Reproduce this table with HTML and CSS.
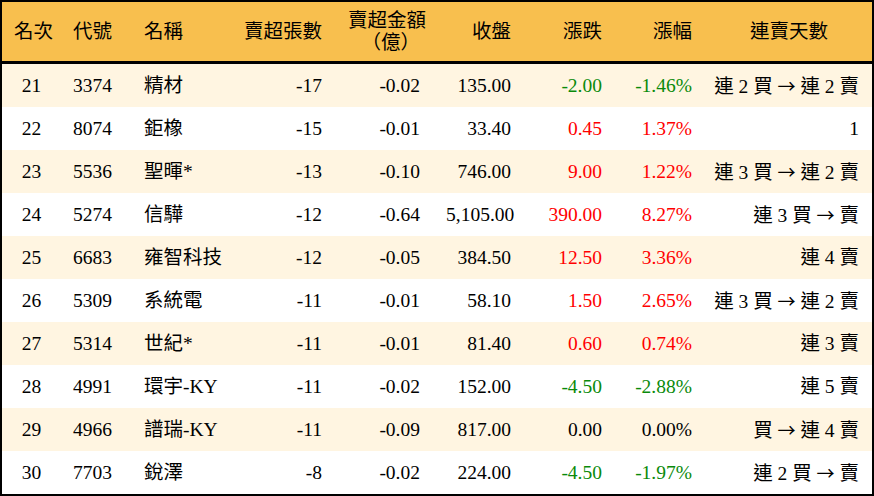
FILE: index.html
```html
<!DOCTYPE html>
<html lang="zh-Hant">
<head>
<meta charset="utf-8">
<title>賣超排行</title>
<link rel="stylesheet" href="styles.css">
</head>
<body>
<div class="frame">
<table class="rank">
  <colgroup>
    <col class="c1"><col class="c2"><col class="c3"><col class="c4"><col class="c5"><col class="c6"><col class="c7"><col class="c8"><col class="c9">
  </colgroup>
  <thead>
    <tr>
      <th class="ctr">名次</th>
      <th class="lft">代號</th>
      <th class="lft">名稱</th>
      <th class="rgt">賣超張數</th>
      <th class="rgt">賣超金額<br>（億）</th>
      <th class="rgt">收盤</th>
      <th class="rgt">漲跌</th>
      <th class="rgt">漲幅</th>
      <th class="ctr">連賣天數</th>
    </tr>
  </thead>
  <tbody>
    <tr class="odd"><td class="ctr">21</td><td class="lft">3374</td><td class="lft">精材</td><td class="rgt">-17</td><td class="rgt">-0.02</td><td class="rgt">135.00</td><td class="rgt dn">-2.00</td><td class="rgt dn">-1.46%</td><td class="rgt last">連 2 買 <span class="arr">→</span> 連 2 賣</td></tr>
    <tr><td class="ctr">22</td><td class="lft">8074</td><td class="lft">鉅橡</td><td class="rgt">-15</td><td class="rgt">-0.01</td><td class="rgt">33.40</td><td class="rgt up">0.45</td><td class="rgt up">1.37%</td><td class="rgt last">1</td></tr>
    <tr class="odd"><td class="ctr">23</td><td class="lft">5536</td><td class="lft">聖暉*</td><td class="rgt">-13</td><td class="rgt">-0.10</td><td class="rgt">746.00</td><td class="rgt up">9.00</td><td class="rgt up">1.22%</td><td class="rgt last">連 3 買 <span class="arr">→</span> 連 2 賣</td></tr>
    <tr><td class="ctr">24</td><td class="lft">5274</td><td class="lft">信驊</td><td class="rgt">-12</td><td class="rgt">-0.64</td><td class="rgt">5,105.00</td><td class="rgt up">390.00</td><td class="rgt up">8.27%</td><td class="rgt last">連 3 買 <span class="arr">→</span> 賣</td></tr>
    <tr class="odd"><td class="ctr">25</td><td class="lft">6683</td><td class="lft">雍智科技</td><td class="rgt">-12</td><td class="rgt">-0.05</td><td class="rgt">384.50</td><td class="rgt up">12.50</td><td class="rgt up">3.36%</td><td class="rgt last">連 4 賣</td></tr>
    <tr><td class="ctr">26</td><td class="lft">5309</td><td class="lft">系統電</td><td class="rgt">-11</td><td class="rgt">-0.01</td><td class="rgt">58.10</td><td class="rgt up">1.50</td><td class="rgt up">2.65%</td><td class="rgt last">連 3 買 <span class="arr">→</span> 連 2 賣</td></tr>
    <tr class="odd"><td class="ctr">27</td><td class="lft">5314</td><td class="lft">世紀*</td><td class="rgt">-11</td><td class="rgt">-0.01</td><td class="rgt">81.40</td><td class="rgt up">0.60</td><td class="rgt up">0.74%</td><td class="rgt last">連 3 賣</td></tr>
    <tr><td class="ctr">28</td><td class="lft">4991</td><td class="lft">環宇-KY</td><td class="rgt">-11</td><td class="rgt">-0.02</td><td class="rgt">152.00</td><td class="rgt dn">-4.50</td><td class="rgt dn">-2.88%</td><td class="rgt last">連 5 賣</td></tr>
    <tr class="odd"><td class="ctr">29</td><td class="lft">4966</td><td class="lft">譜瑞-KY</td><td class="rgt">-11</td><td class="rgt">-0.09</td><td class="rgt">817.00</td><td class="rgt">0.00</td><td class="rgt">0.00%</td><td class="rgt last">買 <span class="arr">→</span> 連 4 賣</td></tr>
    <tr><td class="ctr">30</td><td class="lft">7703</td><td class="lft">銳澤</td><td class="rgt">-8</td><td class="rgt">-0.02</td><td class="rgt">224.00</td><td class="rgt dn">-4.50</td><td class="rgt dn">-1.97%</td><td class="rgt last">連 2 買 <span class="arr">→</span> 賣</td></tr>
  </tbody>
</table>
</div>
</body>
</html>
```

FILE: styles.css
```css
html, body {
  margin: 0;
  padding: 0;
  background: #ffffff;
}

.frame {
  box-sizing: border-box;
  width: 874px;
  height: 496px;
  border: 2px solid #000000;
  overflow: hidden;
}

.rank {
  width: 870px;
  border-collapse: collapse;
  table-layout: fixed;
  font-family: "Liberation Serif", "Noto Sans CJK TC", serif;
  font-size: 19.5px;
  color: #000000;
}

.c1 { width: 59px; }
.c2 { width: 71px; }
.c3 { width: 100px; }
.c4 { width: 104px; }
.c5 { width: 98px; }
.c6 { width: 91px; }
.c7 { width: 91px; }
.c8 { width: 90px; }
.c9 { width: 166px; }

.rank th {
  background: #f8bf4e;
  font-weight: normal;
  height: 59px;
  padding: 0 14px 0 12px;
  line-height: 22px;
  border-bottom: 3px solid #000000;
  vertical-align: middle;
  white-space: nowrap;
}

.rank td {
  height: 43px;
  padding: 0 14px 0 12px;
  line-height: 22px;
  vertical-align: middle;
  white-space: nowrap;
}

.rank th.ctr,
.rank td.ctr {
  padding: 0 12px;
}

.rank td.last {
  padding: 0 13px 0 0;
}

.rank tr.odd td {
  background: #fff5e1;
}

.ctr { text-align: center; }
.lft { text-align: left; }
.rgt { text-align: right; }

.arr {
  font-family: "Noto Sans CJK TC", sans-serif;
  font-size: 18px;
}

.up { color: #ff0000; }
.dn { color: #0a8a0a; }
```
